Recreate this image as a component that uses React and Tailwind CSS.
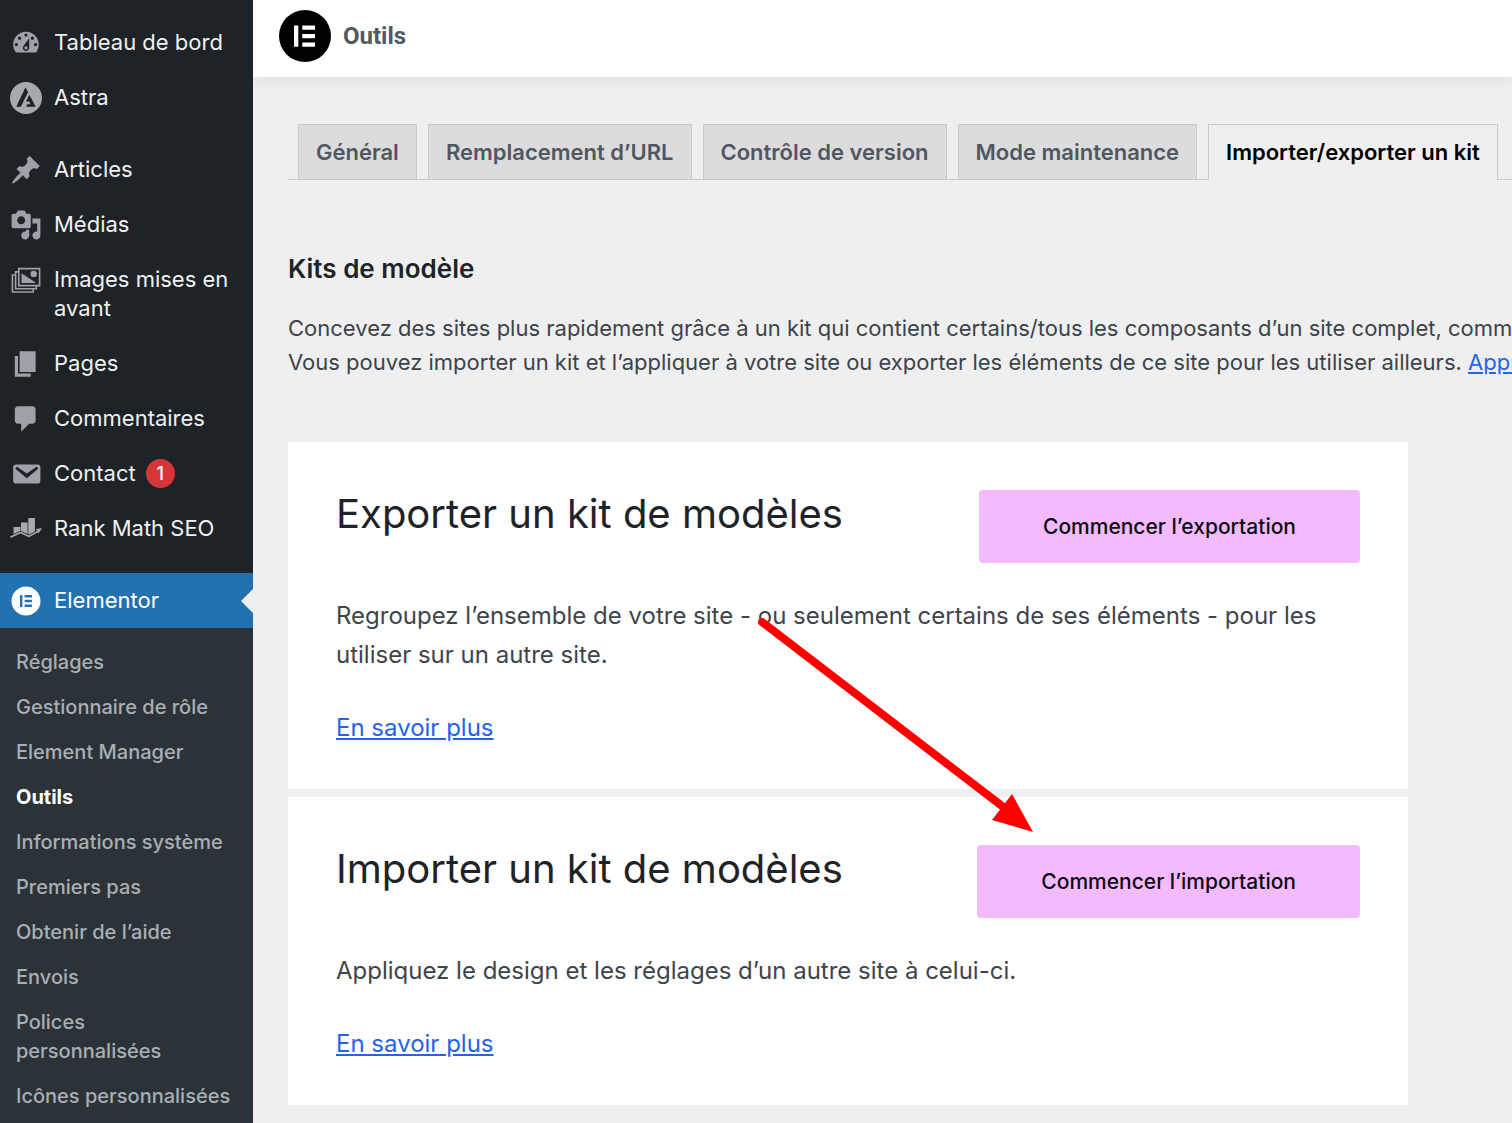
import React from "react";

const DashboardIcon = () => (
  <svg viewBox="0 0 20 20" className="size-8 fill-current" aria-hidden="true">
    <path d="M3.76 16h12.48c1.1-1.37 1.76-3.11 1.76-5 0-4.42-3.58-8-8-8s-8 3.58-8 8c0 1.89.66 3.63 1.76 5zM10 4c.55 0 1 .45 1 1s-.45 1-1 1-1-.45-1-1 .45-1 1-1zM6 6c.55 0 1 .45 1 1s-.45 1-1 1-1-.45-1-1 .45-1 1-1zm8 0c.55 0 1 .45 1 1s-.45 1-1 1-1-.45-1-1 .45-1 1-1zm-5.37 5.55L12 7v6c0 1.1-.9 2-2 2s-2-.9-2-2c0-.57.24-1.08.63-1.45zM4 10c.55 0 1 .45 1 1s-.45 1-1 1-1-.45-1-1 .45-1 1-1zm12 0c.55 0 1 .45 1 1s-.45 1-1 1-1-.45-1-1 .45-1 1-1zm-5 3c0-.55-.45-1-1-1s-1 .45-1 1 .45 1 1 1 1-.45 1-1z" />
  </svg>
);

const AstraIcon = () => (
  <svg viewBox="0 0 32 32" className="size-8" aria-hidden="true">
    <circle cx="16" cy="16" r="16" fill="#a7aaad" />
    <path d="M15.6 5.2 6.2 24.7h4.6L18 10.2z" fill="#1d2327" />
    <path d="m19.4 12.8-3.3 6.8h3.2l1.1 2.6h-3.2l-1 2.5h9.4z" fill="#1d2327" />
  </svg>
);

const PinIcon = () => (
  <svg viewBox="0 0 20 20" className="size-8 fill-current" aria-hidden="true">
    <path d="M10.44 3.02l1.82-1.82 6.36 6.35-1.83 1.82c-1.05-.68-2.48-.57-3.41.36l-.75.75c-.92.93-1.04 2.35-.35 3.41l-1.83 1.82-2.41-2.41-2.8 2.79c-.42.42-3.38 2.71-3.8 2.29s1.86-3.39 2.28-3.81l2.79-2.79L4.1 9.36l1.83-1.82c1.05.69 2.48.57 3.4-.36l.75-.75c.93-.92 1.05-2.35.36-3.41z" />
  </svg>
);

const MediaIcon = () => (
  <svg viewBox="0 0 20 20" className="size-8 fill-current" aria-hidden="true">
    <path d="M13 11V4c0-.55-.45-1-1-1h-1.67L9 1H5L3.67 3H2c-.55 0-1 .45-1 1v7c0 .55.45 1 1 1h10c.55 0 1-.45 1-1zM7 4.5c1.38 0 2.5 1.12 2.5 2.5S8.38 9.5 7 9.5 4.5 8.38 4.5 7 5.62 4.5 7 4.5zM14 6h5v10.5c0 1.38-1.12 2.5-2.5 2.5S14 17.88 14 16.5s1.12-2.5 2.5-2.5c.17 0 .34.02.5.05V9h-3V6zm-4 8.05V13h2v3.5c0 1.38-1.12 2.5-2.5 2.5S7 17.88 7 16.5 8.12 14 9.5 14c.17 0 .34.02.5.05z" />
  </svg>
);

const ImagesIcon = () => (
  <svg viewBox="0 0 20 20" className="size-8 fill-current" aria-hidden="true">
    <path
      d="M5.5 2.9h13v10.6h-13zM5 4.9H3.5v10.6h13V14M3 6.9H1.5v10.6h13V16"
      fill="none"
      stroke="currentColor"
    />
    <path d="M7.2 5.8l9.2 6H7.2z" />
    <circle cx="14.8" cy="6.2" r="2" />
  </svg>
);

const PagesIcon = () => (
  <svg viewBox="0 0 20 20" className="size-8 fill-current" aria-hidden="true">
    <path d="M6 15V2h10v13H6zm-1 1h8v2H3V5h2v11z" />
  </svg>
);

const CommentIcon = () => (
  <svg viewBox="0 0 20 20" className="size-8 fill-current" aria-hidden="true">
    <path d="M5 2h9c1.1 0 2 .9 2 2v7c0 1.1-.9 2-2 2h-2l-5 5v-5H5c-1.1 0-2-.9-2-2V4c0-1.1.9-2 2-2z" />
  </svg>
);

const MailIcon = () => (
  <svg viewBox="0 0 20 20" className="size-8 fill-current" aria-hidden="true">
    <path d="M3.87 4h13.25C18.37 4 19 4.59 19 5.79v8.42c0 1.19-.63 1.79-1.88 1.79H3.87c-1.25 0-1.88-.6-1.88-1.79V5.79c0-1.2.63-1.79 1.88-1.79zm6.62 8.6l6.74-5.53c.24-.2.43-.66.13-1.07-.29-.41-.82-.42-1.17-.17l-5.7 3.86L4.8 5.83c-.35-.25-.88-.24-1.17.17-.3.41-.11.87.13 1.07z" />
  </svg>
);

const RankMathIcon = () => (
  <svg viewBox="0 0 32 32" className="size-8" aria-hidden="true">
    <path
      d="M3.5 14h7v6l-7 3zM11 9.500h6.600v12l-6.600-3zM18.300 5h6.600v15l-6.600 3z"
      fill="#a7aaad"
    />
    <path
      d="M.3 24.2 10.4 19.4l8.6 4 9.2-5.2"
      fill="none"
      stroke="#1d2327"
      strokeWidth="3"
    />
    <path
      d="M.3 24.2 10.4 19.4l8.6 4 9.2-5.2"
      fill="none"
      stroke="#a7aaad"
      strokeWidth="1.7"
    />
    <path d="m25.8 16 6.2-.7-3.4 5z" fill="#a7aaad" />
  </svg>
);

const ElementorIcon = () => (
  <svg viewBox="0 0 32 32" className="size-8" aria-hidden="true">
    <circle cx="16" cy="16" r="14.5" fill="#fff" />
    <path
      d="M10 10h2.4v12H10zM14.6 10H22v2.4h-7.4zM14.6 14.8H22v2.4h-7.4zM14.6 19.6H22V22h-7.4z"
      fill="#2271b1"
    />
  </svg>
);

const menuGroups = [
  [
    { label: "Tableau de bord", Icon: DashboardIcon },
    { label: "Astra", Icon: AstraIcon },
  ],
  [
    { label: "Articles", Icon: PinIcon },
    { label: "Médias", Icon: MediaIcon },
    { label: "Images mises en avant", Icon: ImagesIcon },
    { label: "Pages", Icon: PagesIcon },
    { label: "Commentaires", Icon: CommentIcon },
    { label: "Contact", Icon: MailIcon, count: 1 },
    { label: "Rank Math SEO", Icon: RankMathIcon },
  ],
];

const submenu = [
  "Réglages",
  "Gestionnaire de rôle",
  "Element Manager",
  "Outils",
  "Informations système",
  "Premiers pas",
  "Obtenir de l’aide",
  "Envois",
  "Polices personnalisées",
  "Icônes personnalisées",
];

const tabs = [
  "Général",
  "Remplacement d’URL",
  "Contrôle de version",
  "Mode maintenance",
  "Importer/exporter un kit",
];

const kits = [
  {
    title: "Exporter un kit de modèles",
    action: "Commencer l’exportation",
    text: "Regroupez l’ensemble de votre site - ou seulement certains de ses éléments - pour les utiliser sur un autre site.",
  },
  {
    title: "Importer un kit de modèles",
    action: "Commencer l’importation",
    text: "Appliquez le design et les réglages d’un autre site à celui-ci.",
  },
];

const Sidebar = () => (
  <aside className="relative z-10 w-[253px] shrink-0 bg-[#1d2327] pt-[15px]">
    <nav>
      {menuGroups.map((group, i) => (
        <ul key={i} className="mb-[17px]">
          {group.map(({ label, Icon, count }) => (
            <li key={label}>
              <a
                href="#"
                className="flex items-start gap-3 py-[13px] pr-4 pl-[10px] text-[22px] leading-[29px] text-[#f0f0f1]"
              >
                <span className="flex h-[29px] shrink-0 items-center text-[#9ca2a7]">
                  <Icon />
                </span>
                <span>{label}</span>
                {count && (
                  <span className="-ml-[2px] flex size-[29px] items-center justify-center rounded-full bg-[#d63638] text-lg font-medium text-white">
                    {count}
                  </span>
                )}
              </a>
            </li>
          ))}
        </ul>
      ))}

      <a
        href="#"
        className="relative flex items-center gap-3 bg-[#2271b1] py-[13px] pl-[10px] text-[22px] leading-[29px] text-white"
      >
        <span className="flex h-[29px] items-center">
          <ElementorIcon />
        </span>
        <span>Elementor</span>
        <span className="absolute top-1/2 right-0 -translate-y-1/2 border-y-[12px] border-r-[12px] border-y-transparent border-r-[#efefef]" />
      </a>

      <ul className="bg-[#2c3338] pt-3 pb-4">
        {submenu.map((item) => (
          <li key={item}>
            <a
              href="#"
              className={
                item === "Outils"
                  ? "block py-2 pr-5 pl-4 text-xl leading-[29px] font-bold text-white"
                  : "block py-2 pr-5 pl-4 text-xl leading-[29px] font-medium text-[#a9afb4]"
              }
            >
              {item}
            </a>
          </li>
        ))}
      </ul>
    </nav>
  </aside>
);

const KitCard = ({ title, action, text }) => (
  <section className="bg-white px-12 pt-12 pb-[42px] text-2xl leading-[39px] text-[#3f444b]">
    <div className="flex items-start justify-between">
      <h3 className="text-[40px] leading-[48px] text-[#1d2327]">{title}</h3>
      <button
        type="button"
        className="h-[73px] rounded-[4px] bg-[#f3bafd] px-16 text-[21px] font-medium text-[#0c0d0e]"
      >
        {action}
      </button>
    </div>
    <p className="mt-[33px]">{text}</p>
    <p className="mt-[34px]">
      <a href="#" className="text-[#2563eb] underline">
        En savoir plus
      </a>
    </p>
  </section>
);

const App = () => {
  return (
    <div className="flex h-screen overflow-hidden bg-[#efefef] font-[Inter,'Liberation_Sans',sans-serif]">
      <Sidebar />

      <div className="min-w-0 flex-1">
        <header className="flex h-[77px] items-center gap-3 bg-white pb-[5px] pl-[26px] shadow-[0_4px_12px_rgba(0,0,0,0.06)]">
          <svg viewBox="0 0 52 52" className="size-[52px]" aria-hidden="true">
            <circle cx="26" cy="26" r="26" />
            <path
              d="M15 15.5h4.3v21.3H15zM23.3 15.5H36v4.3H23.3zM23.3 24H36v4.3H23.3zM23.3 32.5H36v4.3H23.3z"
              fill="#fff"
            />
          </svg>
          <h1 className="font-[Roboto,sans-serif] text-2xl font-bold text-[#515962]">
            Outils
          </h1>
        </header>

        <main className="pt-[47px] pl-[35px]">
          <nav className="flex gap-[11px] border-b border-[#c9cacd] pl-[10px] text-[22px] leading-[54px] font-semibold whitespace-nowrap">
            {tabs.map((tab) => (
              <a
                key={tab}
                href="#"
                className={
                  tab === "Importer/exporter un kit"
                    ? "-mb-px border-x border-t border-[#c9cacd] bg-[#efefef] px-[17px] text-black"
                    : "border-x border-t border-[#c9cacd] bg-[#dcdcde] px-[17px] text-[#50575e]"
                }
              >
                {tab}
              </a>
            ))}
          </nav>

          <h2 className="mt-[73px] text-[26px] leading-8 font-semibold text-[#1d2327]">
            Kits de modèle
          </h2>
          <p className="mt-[26px] text-[22px] leading-[34px] whitespace-nowrap text-[#3c434a]">
            Concevez des sites plus rapidement grâce à un kit qui contient
            certains/tous les composants d’un site complet, comme
            <br />
            Vous pouvez importer un kit et l’appliquer à votre site ou exporter
            les éléments de ce site pour les utiliser ailleurs.{" "}
            <a href="#" className="text-[#2563eb] underline">
              Appr
            </a>
          </p>

          <div className="relative mt-[63px] flex max-w-[1120px] flex-col gap-2">
            {kits.map((kit) => (
              <KitCard key={kit.title} {...kit} />
            ))}
            <svg
              viewBox="0 0 280 216"
              className="pointer-events-none absolute top-[176px] left-[470px] w-[280px]"
              aria-hidden="true"
            >
              <path
                d="M4 4 244 188"
                stroke="#f00"
                strokeWidth="8"
                strokeLinecap="round"
              />
              <path d="M254 176 234 202l41 12z" fill="#f00" />
            </svg>
          </div>
        </main>
      </div>
    </div>
  );
};

export default App;
